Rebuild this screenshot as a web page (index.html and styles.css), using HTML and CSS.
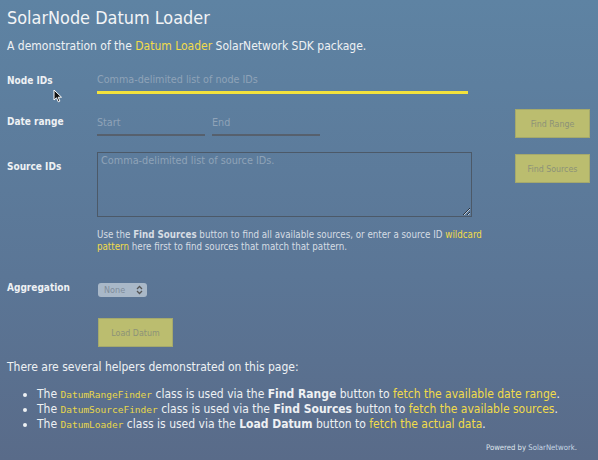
FILE: index.html
```html
<!DOCTYPE html>
<html>
<head>
<meta charset="utf-8">
<link rel="stylesheet" href="styles.css">
</head>
<body>
<h1 class="title">SolarNode Datum Loader</h1>
<p class="intro">A demonstration of the <a class="link">Datum Loader</a> SolarNetwork SDK package.</p>

<form class="form">
  <label class="label row-node">Node IDs</label>
  <div class="field row-node"><input class="text-input node-input" placeholder="Comma-delimited list of node IDs"></div>

  <label class="label row-date">Date range</label>
  <div class="field row-date date-pair">
    <input class="text-input date-input" placeholder="Start">
    <input class="text-input date-input" placeholder="End">
  </div>
  <div class="btn-cell row-date"><button type="button" class="btn">Find Range</button></div>

  <label class="label row-source">Source IDs</label>
  <div class="field row-source">
    <textarea class="source-area" placeholder="Comma-delimited list of source IDs."></textarea>
    <p class="help">Use the <b>Find Sources</b> button to find all available sources, or enter a source ID <a class="link">wildcard pattern</a> here first to find sources that match that pattern.</p>
  </div>
  <div class="btn-cell row-source"><button type="button" class="btn btn-sources">Find Sources</button></div>

  <label class="label row-agg">Aggregation</label>
  <div class="field row-agg"><span class="select">None<svg class="chev" width="7" height="10" viewBox="0 0 7 10"><path d="M1 4 L3.5 1.5 L6 4 M1 6 L3.5 8.5 L6 6" fill="none" stroke="#555" stroke-width="1.3"/></svg></span></div>

  <div class="field row-load"><button type="button" class="btn btn-load">Load Datum</button></div>
</form>

<p class="helpers-intro">There are several helpers demonstrated on this page:</p>
<ul class="helpers">
  <li>The <code>DatumRangeFinder</code> class is used via the <b>Find Range</b> button to <a class="link">fetch the available date range</a>.</li>
  <li>The <code>DatumSourceFinder</code> class is used via the <b>Find Sources</b> button to <a class="link">fetch the available sources</a>.</li>
  <li>The <code>DatumLoader</code> class is used via the <b>Load Datum</b> button to <a class="link">fetch the actual data</a>.</li>
</ul>
<p class="powered">Powered by <a class="plink">SolarNetwork</a>.</p>

<svg class="cursor" width="10" height="14" viewBox="0 0 10 14"><path d="M1 1 L1 11 L3.5 8.8 L5.3 12.8 L6.9 12.1 L5.2 8.2 L8.5 8.2 Z" fill="#111" stroke="#fff" stroke-width="1" stroke-linejoin="round"/></svg>
</body>
</html>
```

FILE: styles.css
```css
html, body {
  margin: 0;
  height: 100%;
}
body {
  position: relative;
  background: linear-gradient(to bottom, #5e83a3 0%, #5b7696 60%, #596b89 100%);
  font-family: "DejaVu Sans Condensed", "DejaVu Sans", sans-serif;
  font-stretch: condensed;
  color: #eef1f4;
  padding: 0 8px 0 7px;
  box-sizing: border-box;
  overflow: hidden;
}
.title {
  font-size: 17.9px;
  font-weight: normal;
  margin: 6px 0 0;
  line-height: 24px;
  color: #f2f4f6;
}
.intro {
  font-size: 12px;
  margin: 8px 0 0;
  line-height: 16px;
}
.link {
  color: #f2dc4a;
}
.form {
  display: grid;
  grid-template-columns: 90px 418px 75px;
  align-items: start;
  margin-top: 13px;
}
.label {
  grid-column: 1;
  font-size: 10px;
  font-weight: bold;
  line-height: 14px;
}
.field { grid-column: 2; }
.btn-cell { grid-column: 3; }
.row-node { grid-row: 1; }
.row-date { grid-row: 2; }
.row-source { grid-row: 3; }
.row-agg { grid-row: 4; }
.row-load { grid-row: 5; }

.label.row-node { margin-top: 7px; }
.label.row-date { margin-top: 21px; }
.label.row-source { margin-top: 22px; }
.label.row-agg { margin-top: 28px; }

.text-input {
  display: block;
  background: transparent;
  border: 0;
  font-family: "DejaVu Sans Condensed", "DejaVu Sans", sans-serif;
  font-stretch: condensed;
  font-size: 10.7px;
  color: #eee;
  height: 16px;
  padding: 0 0 4px;
  outline: none;
}
.text-input::placeholder { color: #8fa3b8; }
.node-input {
  width: 371px;
  margin-top: 4px;
  border-bottom: 3px solid #f3e23c;
}
.date-pair {
  display: flex;
  gap: 7px;
  margin-top: 20px;
}
.date-input {
  width: 108px;
  border-bottom: 2px solid #56606d;
}
.btn-cell.row-date { margin-top: 15px; }
.btn {
  display: block;
  width: 75px;
  height: 29px;
  background: #bbbd6f;
  border: 1px solid #a5a96c;
  color: #8c9278;
  font-family: "DejaVu Sans Condensed", "DejaVu Sans", sans-serif;
  font-stretch: condensed;
  font-size: 8.8px;
  padding: 0;
  box-sizing: border-box;
}
.source-area {
  display: block;
  width: 375px;
  height: 65px;
  margin-top: 14px;
  box-sizing: border-box;
  background: transparent;
  border: 1px solid #4c5968;
  font-family: "DejaVu Sans Condensed", "DejaVu Sans", sans-serif;
  font-stretch: condensed;
  font-size: 10.8px;
  padding: 1px 3px;
  resize: vertical;
}
.source-area::placeholder { color: #8fa3b8; }
.btn-cell.row-source { margin-top: 16px; }
.help {
  font-size: 9.7px;
  line-height: 12px;
  margin: 12px 0 0;
  color: #d6dde4;
  width: 400px;
}
.select {
  display: flex;
  align-items: center;
  justify-content: space-between;
  width: 49px;
  height: 14px;
  box-sizing: border-box;
  margin-top: 30px;
  margin-left: 1px;
  padding: 0 4px 0 6px;
  background: #a9b8c8;
  border-radius: 3px;
  font-size: 9px;
  color: #7f8c9a;
}
.btn-load {
  margin-top: 21px;
  margin-left: 1px;
}
.helpers-intro {
  font-size: 12px;
  line-height: 16px;
  margin: 12px 0 0;
}
.helpers {
  font-size: 12px;
  line-height: 14px;
  margin: 12px 0 0;
  padding-left: 30px;
}
code {
  font-family: "DejaVu Sans Mono", monospace;
  font-stretch: normal;
  font-size: 9.5px;
  color: #e8d84a;
}
.powered {
  font-size: 7.7px;
  line-height: 10px;
  text-align: right;
  margin: 11px 13px 0 0;
  color: #dfe4ea;
}
.plink { color: #c7d6e4; }
.cursor {
  position: absolute;
  left: 53px;
  top: 89px;
}
```
